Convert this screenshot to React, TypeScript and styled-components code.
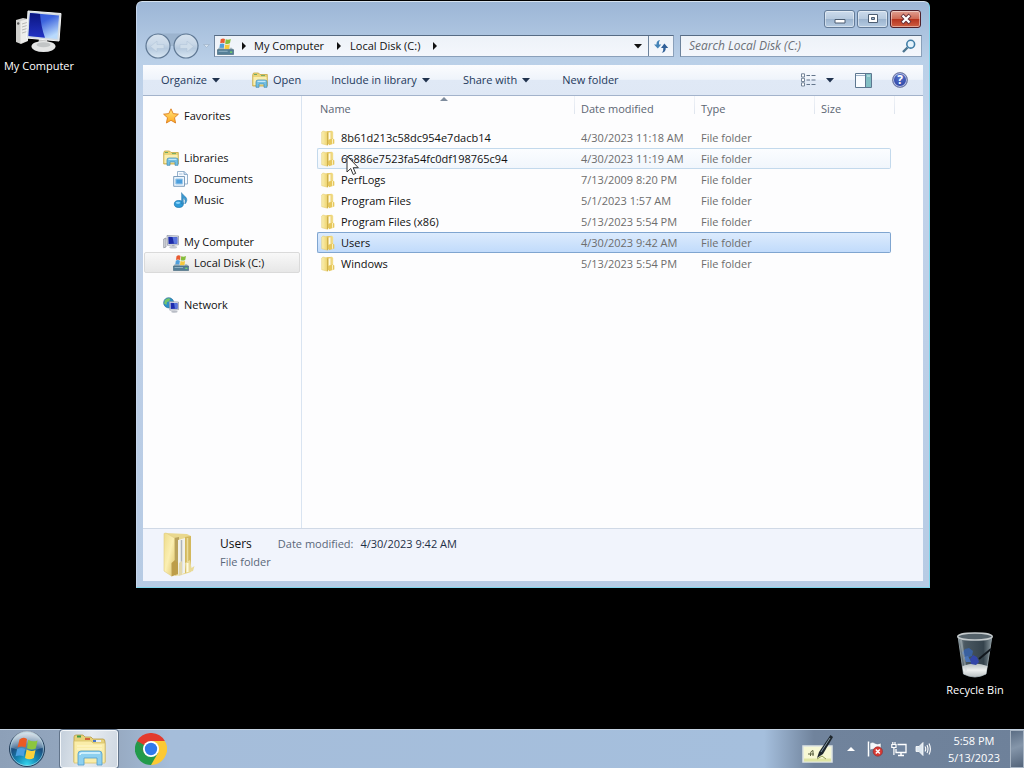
import React from "react";
import styled, { createGlobalStyle } from "styled-components";

const GlobalStyle = createGlobalStyle`
  * { box-sizing: border-box; }
  body { margin: 0; background: #000; }
  body, button, input {
    font-family: "Open Sans", "Noto Sans", sans-serif;
    font-size: 11px;
    line-height: 16px;
  }
  button { border: 0; padding: 0; margin: 0; background: none; color: inherit; }
  svg { display: block; flex: none; }
  h1, p, dl, dd, ul { margin: 0; padding: 0; }
`;

/* ---------- icons ---------- */

const StartOrb = () => (
  <svg width="38" height="38" viewBox="0 0 38 38" aria-hidden="true">
    <defs>
      <radialGradient id="orb" cx="50%" cy="95%" r="90%">
        <stop offset="0" stopColor="#35d6ee" />
        <stop offset=".35" stopColor="#1587b4" />
        <stop offset=".65" stopColor="#1b4f80" />
        <stop offset="1" stopColor="#8fa8bd" />
      </radialGradient>
      <linearGradient id="orbShine" x1="0" y1="0" x2="0" y2="1">
        <stop offset="0" stopColor="#fff" stopOpacity=".7" />
        <stop offset="1" stopColor="#fff" stopOpacity=".15" />
      </linearGradient>
    </defs>
    <circle cx="19" cy="19" r="17.500" fill="url(#orb)" stroke="#233e5a" />
    <path d="M2.500 17.500A16.500 16.500 0 0 1 35.500 17.500Q19 24 2.500 17.500Z" fill="url(#orbShine)" />
    <circle cx="19" cy="19" r="16.500" fill="none" stroke="#b8dcea" strokeOpacity=".6" />
    <path d="M11.500 9.500Q15 6.500 19 9L17.500 17.500Q13.500 15.500 9.500 17.500Z" fill="#ea5b24" />
    <path d="M20.300 9.800Q24.500 12.500 29.500 10.500L27.800 18.500Q23 20.500 19 18.300Z" fill="#8cc63e" />
    <path d="M9.200 19Q13.500 17 17.200 19L15.700 26.500Q12 24.500 7.500 26.300Z" fill="#4a9fe0" />
    <path d="M18.600 19.600Q23 22 27.500 20L25.800 28Q21.500 30.500 17 28Z" fill="#fbd23c" />
  </svg>
);

const FolderSmall = () => (
  <svg width="16" height="16" viewBox="0 0 16 16" aria-hidden="true">
    <defs>
      <linearGradient id="fs" x1="0" y1="0" x2="1" y2="0">
        <stop offset="0" stopColor="#fbf0b4" />
        <stop offset="1" stopColor="#ecd16a" />
      </linearGradient>
      <linearGradient id="fsb" x1="0" y1="0" x2="1" y2="0">
        <stop offset="0" stopColor="#e0bd4e" />
        <stop offset="1" stopColor="#f3df8e" />
      </linearGradient>
    </defs>
    <path d="M6.500 1.200L12 .8 13.200 2V13L7 14.500Z" fill="url(#fsb)" />
    <path d="M8.600 2.500L10.500 2.200V9L8.600 10Z" fill="#fffae3" />
    <path d="M1.700 2L3 1 7.800 2.200V15.300L1.700 13.700Z" fill="url(#fs)" stroke="#e2c866" strokeWidth=".5" />
    <path d="M7.500 2.500V15" stroke="#c8a844" strokeWidth=".8" />
    <path d="M8.500 10L12.500 8.500 14.300 9.500V13.500L9 15.300Z" fill="#e6c75c" />
    <path d="M12.500 9V13.800" stroke="#fbf0ba" />
  </svg>
);

const FolderLarge = () => (
  <svg width="34" height="46" viewBox="0 0 34 46" aria-hidden="true">
    <defs>
      <linearGradient id="fl" x1="0" y1="0" x2="1" y2="1">
        <stop offset="0" stopColor="#eedc8c" />
        <stop offset=".5" stopColor="#fbefb2" />
        <stop offset="1" stopColor="#e0c56c" />
      </linearGradient>
    </defs>
    <path d="M2 1L24 2 28 4V40L22 42 12 44Z" fill="#e9d88e" />
    <path d="M11 6L16 5V42H11Z" fill="#b9a25c" />
    <path d="M15 8L22 6V41L15 43Z" fill="#f1f1ec" />
    <path d="M18.500 8V41" stroke="#aeb4bb" strokeWidth="1.500" />
    <path d="M22 5L28 4V38L22 41Z" fill="#d3b85d" />
    <path d="M24.500 6V38" stroke="#ebdc98" strokeWidth="1.500" />
    <path d="M1 1.500L3 1 11.500 6V30L8.500 32V44L1 39Z" fill="url(#fl)" stroke="#e0cc82" strokeWidth=".6" />
    <path d="M8.500 31L12 28 15 31V42L8.500 44.500Z" fill="#bd9d49" />
    <path d="M16 31L19 29V43L15.500 44Z" fill="#e3d9ac" />
    <path d="M22 31L27 28 28.500 36 31.500 34 30 39 23 41Z" fill="#e9da98" />
    <path d="M24.500 31V40" stroke="#fffbe0" strokeWidth="2" />
  </svg>
);

const LibraryFolder = () => (
  <svg width="16" height="16" viewBox="0 0 16 16" aria-hidden="true">
    <path d="M.7 3V14H15.300V2.500H8L6.500 1H1.500Z" fill="#ecd579" stroke="#c5a742" strokeWidth=".8" />
    <path d="M1.500 5H14.500V13H1.500Z" fill="#f9eeb1" />
    <path d="M2 2.500H5M9 3.600H13" stroke="#70a965" />
    <path d="M4 15.300V10Q4 8 6 8H13Q15 8 15 10V15.300H12V12H7V15.300Z" fill="#72bfe3" stroke="#4189b0" strokeWidth=".7" />
    <path d="M5.500 9.300H13.500" stroke="#d8f2ff" />
  </svg>
);

const StarIcon = () => (
  <svg width="16" height="16" viewBox="0 0 16 16" aria-hidden="true">
    <defs>
      <linearGradient id="star" x1="0" y1="0" x2="0" y2="1">
        <stop offset="0" stopColor="#ffe680" />
        <stop offset="1" stopColor="#ffa91f" />
      </linearGradient>
    </defs>
    <path d="M8 .8L10.200 5.600 15.400 6.200 11.500 9.700 12.600 15 8 12.300 3.400 15 4.500 9.700 .6 6.200 5.800 5.600Z" fill="url(#star)" stroke="#db7e20" strokeWidth=".9" />
  </svg>
);

const DocumentsIcon = () => (
  <svg width="16" height="16" viewBox="0 0 16 16" aria-hidden="true">
    <path d="M4.500 .5H11L14.500 3.500V13H4.500Z" fill="#f6faff" stroke="#8aa9c6" strokeWidth=".9" />
    <path d="M11 .5V3.500H14.500" fill="#c5daf0" stroke="#8aa9c6" strokeWidth=".9" />
    <path d="M6 3H9.500" stroke="#a9c4de" />
    <path d="M.7 5.500H11.500V15.300H.7Z" fill="#edf5fc" stroke="#7294b5" strokeWidth=".9" />
    <path d="M2.800 8H9.500V13H2.800Z" fill="#4c9fdd" stroke="#9cc9ec" />
  </svg>
);

const MusicIcon = () => (
  <svg width="16" height="16" viewBox="0 0 16 16" aria-hidden="true">
    <ellipse cx="5.800" cy="12" rx="4.500" ry="3.500" fill="#2f9bd8" stroke="#1971aa" strokeWidth=".7" />
    <path d="M8.600 12V.6C10 4 14.300 4.500 13.800 8.500Q13.300 11 11.800 12Q13 7.500 10.300 5.800V12Z" fill="#3a97cf" stroke="#2a79aa" strokeWidth=".5" />
    <ellipse cx="5" cy="10.800" rx="2.300" ry="1.100" fill="#8cd3fb" />
  </svg>
);

const ComputerIcon = () => (
  <svg width="16" height="16" viewBox="0 0 16 16" aria-hidden="true">
    <path d="M.7 5L3 4V13L.7 13.800Z" fill="#d3d6dc" stroke="#868b96" strokeWidth=".7" />
    <path d="M4 1.500L15.500 2V10.800L4.500 11.300Z" fill="#dfe3ea" stroke="#888e9d" strokeWidth=".7" />
    <path d="M5.300 2.800L14.300 3.200V9.700L5.500 10Z" fill="#1c2ba8" />
    <path d="M9.500 3L11 9.800 14.300 9.700V3.200Z" fill="#5a75dd" />
    <path d="M9 11H11.500V12.500H9Z" fill="#a7acb7" />
    <ellipse cx="10.200" cy="13.300" rx="4" ry="1.300" fill="#c3c7cf" />
  </svg>
);

const DriveIcon = ({ size = 16 }: { size?: number }) => (
  <svg width={size} height={size} viewBox="0 0 16 16" aria-hidden="true">
    <path d="M3.500 1.200Q5.500 -.3 7.500 .9L7 5Q5 4 3 5Z" fill="#e85b31" />
    <path d="M8.200 1.200Q10.500 2.200 13 .9L12.200 5Q10 6 7.700 5.300Z" fill="#86bd3c" />
    <path d="M2.800 5.700Q4.800 4.500 6.900 5.700L6.300 10H2.200Z" fill="#4f9edb" />
    <path d="M7.500 6.100Q9.500 6.900 12 5.900L11.500 10.500H6.900Z" fill="#f6c93d" />
    <path d="M1.500 9.200H6.200L7 10.500H11.700L12 9.200H14L15.600 11.500H.4Z" fill="#a5b6c0" />
    <path d="M.4 11H15.600V15.500H.4Z" fill="#557f98" stroke="#3f6478" strokeWidth=".6" />
    <path d="M1.500 12.500H10" stroke="#8fb1c4" />
    <path d="M12.300 13.300H14.300" stroke="#7ae45f" strokeWidth="1.200" />
  </svg>
);

const NetworkIcon = () => (
  <svg width="16" height="16" viewBox="0 0 16 16" aria-hidden="true">
    <circle cx="5.700" cy="5.800" r="5.100" fill="#2c8ec9" stroke="#236a93" strokeWidth=".6" />
    <path d="M2 3Q5 0 7.500 2L6 4.500 4 5 3.500 8 1 6.500Z" fill="#75c56a" />
    <path d="M6.300 4.500L15.500 5V12.700L6.800 13.200Z" fill="#e2e5ec" stroke="#858c9b" strokeWidth=".6" />
    <path d="M7.500 5.800L14.500 6.200V11.700L7.700 12Z" fill="#1d2cae" />
    <path d="M11 6L12 11.800 14.500 11.700V6.200Z" fill="#5974dc" />
    <ellipse cx="11.500" cy="14.700" rx="3.200" ry="1.100" fill="#b9bdc6" />
  </svg>
);

const DesktopComputer = () => (
  <svg width="48" height="48" viewBox="0 0 48 48" aria-hidden="true">
    <defs>
      <linearGradient id="scr" x1="0" y1="0" x2=".6" y2="1">
        <stop offset="0" stopColor="#2d52d8" />
        <stop offset=".45" stopColor="#3c63dd" />
        <stop offset="1" stopColor="#b9dafc" />
      </linearGradient>
      <linearGradient id="scrDark" x1="0" y1="0" x2="0" y2="1">
        <stop offset="0" stopColor="#0b1580" />
        <stop offset="1" stopColor="#2233c4" />
      </linearGradient>
    </defs>
    <path d="M1 13L8 11 13 12V34L6 37 1 35Z" fill="#cfcfcd" />
    <path d="M5.500 14L13 12V33.500L5.500 36.500Z" fill="#ededeb" />
    <path d="M7 17L12 15.500M7 20L12 18.500M7 23L12 21.500M7 26L12 24.500" stroke="#b8b8b6" />
    <circle cx="3.200" cy="16.500" r="1.200" fill="#555" />
    <path d="M24 32L32 33 33 38H23Z" fill="#c7c8c8" />
    <ellipse cx="28.500" cy="39.500" rx="12" ry="5.500" fill="#e4e5e5" />
    <ellipse cx="28.500" cy="37.800" rx="7" ry="2.500" fill="#c2c5c6" />
    <path d="M13 4L46 6.500 44 34 11.500 31Z" fill="#d3dbe2" stroke="#f6f7f8" />
    <path d="M15 6L44 8.500 42.300 32 13.500 29Z" fill="url(#scr)" />
    <path d="M15 6L25 7Q26 20 30 30.700L13.500 29Z" fill="url(#scrDark)" />
  </svg>
);

const RecycleBin = () => (
  <svg width="48" height="48" viewBox="0 0 48 48" aria-hidden="true">
    <defs>
      <linearGradient id="bin" x1="0" y1="0" x2="1" y2="0">
        <stop offset="0" stopColor="#8a989e" />
        <stop offset=".2" stopColor="#4a5861" />
        <stop offset=".75" stopColor="#35434c" />
        <stop offset="1" stopColor="#8a989e" />
      </linearGradient>
      <linearGradient id="trash" x1="0" y1="0" x2="0" y2="1">
        <stop offset="0" stopColor="#b4bcbd" />
        <stop offset=".5" stopColor="#eef0ef" />
        <stop offset="1" stopColor="#b9c0c2" />
      </linearGradient>
    </defs>
    <path d="M7 5L12.500 43Q24 49 35 43L41 5Z" fill="url(#bin)" stroke="#89979d" />
    <path d="M11.500 35Q24 30 36.500 35L35 43Q24 49 12.500 43Z" fill="url(#trash)" />
    <path d="M11 22L14 18 18 17 22 20 21 25 15 27Z" fill="#39609f" />
    <path d="M19 28L22 24 26 26 28 31 25 34 20 33Z" fill="#3346a8" />
    <path d="M13 26L17 25 20 31 15 31Z" fill="#4a74b8" />
    <path d="M28 28L40 18" stroke="#11171d" strokeWidth="2" />
    <ellipse cx="24" cy="5.500" rx="17.200" ry="3.500" fill="#55626a" stroke="#c5cbcd" strokeWidth="1.500" />
    <path d="M10 9L15 40" stroke="#c8d2d5" strokeOpacity=".4" strokeWidth="2" />
  </svg>
);

const ExplorerIcon = () => (
  <svg width="34" height="34" viewBox="0 0 34 34" aria-hidden="true">
    <path d="M2 5Q2 3 4 3H11L13 5H19L21 7H31Q33 7 33 10V30H2Z" fill="#e7d27a" stroke="#b79c48" strokeWidth=".8" />
    <path d="M5 4.500H9" stroke="#3f9d46" strokeWidth="2" />
    <path d="M13 7H18" stroke="#d5653a" strokeWidth="2" />
    <path d="M21 9H29" stroke="#e8eef6" strokeWidth="2" />
    <path d="M21 9H24" stroke="#4a78c4" strokeWidth="2" />
    <path d="M2 9H19L21 11H33V31H2Z" fill="#faeda9" stroke="#d8c16a" strokeWidth=".8" />
    <path d="M5 14H30M5 17H30" stroke="#fff8d0" />
    <path d="M6 33V22Q6 19 9 19H27Q30 19 30 22V33H25V26H12V33Z" fill="#8dd0f0" stroke="#4f9ccb" strokeWidth=".8" />
    <path d="M8 23Q8 21 10 21H28" stroke="#e0f7ff" strokeWidth="1.500" fill="none" />
  </svg>
);

const ChromeIcon = () => (
  <svg width="32" height="32" viewBox="0 0 48 48" aria-hidden="true">
    <path d="M24 24L44.800 12A24 24 0 0 1 24 48Z" fill="#fcc934" />
    <path d="M24 24L24 48A24 24 0 0 1 3.200 12Z" fill="#229a4b" />
    <path d="M24 12H44.800L34.400 30Z" fill="#fcc934" />
    <path d="M34.400 30L24 48 13.600 30Z" fill="#229a4b" />
    <path d="M3.200 12A24 24 0 0 1 44.800 12H24L13.600 30Z" fill="#e33b2e" />
    <path d="M3.200 12L13.600 30 24 36V24Z" fill="#229a4b" />
    <circle cx="24" cy="24" r="12" fill="#fff" />
    <circle cx="24" cy="24" r="9.300" fill="#3079eb" />
  </svg>
);

const TabletInput = () => (
  <svg width="34" height="30" viewBox="0 0 34 30" aria-hidden="true">
    <path d="M1 12H30V28H1Z" fill="#f7f8d5" stroke="#dde3e4" strokeWidth="1.500" />
    <path d="M2 24.500H29V27.500H2Z" fill="#dfe4a2" />
    <path d="M6 20H12M8.500 22Q8 17 11 16.500V22" stroke="#5a6040" fill="none" />
    <path d="M28.500 1L31 3 21 20 15 24 17 18Z" fill="#1e262d" />
    <path d="M28 4L19 18" stroke="#8095a3" />
    <path d="M15 25L20 22 24 25" stroke="#96a056" fill="none" />
  </svg>
);

const FlagIcon = () => (
  <svg width="16" height="16" viewBox="0 0 16 16" aria-hidden="true">
    <path d="M1.500 .5V15.500" stroke="#fff" strokeWidth="1.500" />
    <path d="M3 2Q6 .5 8 2.200T14 2V9Q11 10.500 8.500 9T3 9Z" fill="#f4f7fa" stroke="#54687c" strokeWidth=".5" />
    <circle cx="10.800" cy="10.500" r="4.700" fill="#d83933" stroke="#8e2a2c" strokeWidth=".6" />
    <path d="M8.800 8.500L12.800 12.500M12.800 8.500L8.800 12.500" stroke="#fff" strokeWidth="1.500" />
  </svg>
);

const EthernetIcon = () => (
  <svg width="16" height="16" viewBox="0 0 16 16" aria-hidden="true">
    <path d="M6.500 3.500H15V11.500H5V8" fill="#71859f" stroke="#fff" strokeWidth="1.300" />
    <path d="M7 14.500H13M10 12V14" stroke="#fff" strokeWidth="1.500" />
    <path d="M.8 3.500H5V6.500H.8ZM1.800 3V1M4 3V1M2.900 7V14" stroke="#fff" fill="none" strokeWidth="1.200" />
  </svg>
);

const VolumeIcon = () => (
  <svg width="16" height="16" viewBox="0 0 16 16" aria-hidden="true">
    <path d="M1 5.500H4L8 1.500V14.500L4 10.500H1Z" fill="#dce6ef" stroke="#fff" strokeWidth=".8" />
    <path d="M10 5.500Q11.500 8 10 10.500M12 4Q14 8 12 12M14 2.500Q16.800 8 14 13.500" fill="none" stroke="#fff" strokeWidth="1.100" />
  </svg>
);

const Arrow = ({ dir = "down", color = "#20324d" }: { dir?: "down" | "right" | "up"; color?: string }) => (
  <svg width="8" height="8" viewBox="0 0 8 8" aria-hidden="true">
    <path
      d={dir === "down" ? "M0 2H8L4 6.500Z" : dir === "right" ? "M2 0L6 4 2 8Z" : "M0 6H8L4 2Z"}
      fill={color}
    />
  </svg>
);

const NavArrows = () => (
  <svg width="68" height="28" viewBox="0 0 68 28" aria-hidden="true">
    <defs>
      <linearGradient id="nav" x1="0" y1="0" x2="0" y2="1">
        <stop offset="0" stopColor="#d6e2ee" />
        <stop offset=".4" stopColor="#c9d8e8" />
        <stop offset=".6" stopColor="#b5c9de" />
        <stop offset="1" stopColor="#d9e7f3" />
      </linearGradient>
    </defs>
    <path d="M14 1.500H44Q52 4 55 14H4Q6 4 14 1.500Z" fill="#8ea5c0" fillOpacity=".55" />
    <circle cx="14" cy="14" r="12" fill="url(#nav)" stroke="#5f7894" strokeWidth="1.200" />
    <circle cx="42" cy="14" r="12" fill="url(#nav)" stroke="#5f7894" strokeWidth="1.200" />
    <path d="M6.500 14.500L13 9V12.500H20V16.500H13V20ZM49.500 14.500L43 9V12.500H36V16.500H43V20Z" fill="#cfddea" stroke="#b4c6da" strokeWidth=".6" />
    <path d="M59.500 12.500H65.500L62.500 15.500Z" fill="#d5e2ef" stroke="#9db2c9" strokeWidth=".7" />
  </svg>
);

const RefreshIcon = () => (
  <svg width="16" height="16" viewBox="0 0 16 16" aria-hidden="true">
    <path d="M7 2Q3.200 2.500 3.500 6.500H1L4.800 10.500 8.300 6.500H6Q5.500 3.800 7 2Z" fill="#4484b8" />
    <path d="M8.800 14.800Q13 14 12.700 10H15.200L11.400 5.500 8 10H10.300Q10.700 13 8.800 14.800Z" fill="#2f5f98" />
  </svg>
);

const SearchIcon = () => (
  <svg width="14" height="14" viewBox="0 0 14 14" aria-hidden="true">
    <path d="M1 13L5.500 8.500" stroke="#4c7590" strokeWidth="2.400" />
    <circle cx="8.700" cy="5.200" r="3.900" fill="#e4f3fc" stroke="#3f7da6" strokeWidth="1.600" />
  </svg>
);

const ViewIcon = () => (
  <svg width="16" height="14" viewBox="0 0 16 14" aria-hidden="true">
    <path d="M1.500 .8H4.500V4H1.500ZM1.500 5.300H4.500V8.500H1.500ZM1.500 9.800H4.500V13H1.500Z" fill="#fff" stroke="#66788d" strokeWidth=".9" />
    <path d="M6.500 2.500H10M11.500 2.500H15.500M6.500 7H10M11.500 7H15.500M6.500 11.500H10M11.500 11.500H15.500" stroke="#62748a" />
  </svg>
);

const PaneIcon = () => (
  <svg width="17" height="15" viewBox="0 0 17 15" aria-hidden="true">
    <path d="M.5 .5H16.500V14.500H.5Z" fill="#f9fcff" stroke="#5d7790" />
    <path d="M1 2.500H10" stroke="#9eb3c8" />
    <path d="M11 1H16V14H11Z" fill="#82bfc4" />
    <path d="M10.500 1V14" stroke="#5d7790" />
    <path d="M12 3H15" stroke="#d3eef0" />
  </svg>
);

const CursorIcon = () => (
  <svg width="14" height="21" viewBox="0 0 14 21" aria-hidden="true">
    <path d="M1 1V17L4.700 13.500 7.200 19.500 9.700 18.400 7.200 12.700H12.300Z" fill="#fff" stroke="#333" strokeWidth="1" />
  </svg>
);

/* ---------- layout ---------- */

const Screen = styled.div`
  display: flex;
  flex-direction: column;
  min-height: 100vh;
`;

const Desktop = styled.main`
  flex: 1;
  display: grid;
  grid-template-columns: 136px minmax(0, 1fr) 94px;
`;

const DesktopColumn = styled.div<{ $end?: boolean }>`
  display: flex;
  flex-direction: column;
  justify-content: ${(p) => (p.$end ? "flex-end" : "flex-start")};
  align-items: ${(p) => (p.$end ? "center" : "flex-start")};
  padding: ${(p) => (p.$end ? "0 4px 31px 0" : "7px 0 0")};
`;

const Shortcut = styled.button`
  display: flex;
  flex-direction: column;
  align-items: center;
  gap: 3px;
  width: 78px;
  color: #fff;
`;

const Window = styled.section`
  display: flex;
  flex-direction: column;
  margin: 1px 0 141px;
  padding: 0 6px 6px;
  border: 1px solid;
  border-color: #d5e2ef #7fd6ec #7fd6ec #c6d6ec;
  border-radius: 6px 6px 0 0;
  background: linear-gradient(#9cb6d6, #bad0e8 60px, #c3d3ea 120px, #b7cbe4);
`;

const TitleBar = styled.header`
  display: flex;
  justify-content: flex-end;
  gap: 2px;
  padding: 8px 2px 0 0;
  height: 29px;
`;

const CaptionButton = styled.button<{ $close?: boolean }>`
  display: grid;
  place-items: center;
  width: 31px;
  height: 18px;
  border: 1px solid ${(p) => (p.$close ? "#51202a" : "#637b98")};
  border-radius: 3px;
  box-shadow: inset 0 0 0 1px rgba(255, 255, 255, 0.45);
  background: ${(p) =>
    p.$close
      ? "linear-gradient(#e0a092 0, #cf6a55 48%, #b5321d 50%, #cf5f42)"
      : "linear-gradient(#ccdbec 0, #b7cadf 48%, #9bb3ce 50%, #b5cbe2)"};
`;

const NavBar = styled.nav`
  display: flex;
  align-items: center;
  height: 34px;
  padding: 0 1px 4px;
`;

const field = `
  height: 22px;
  border: 1px solid #8aa0ba;
  border-top-color: #566b84;
  border-left-color: #6c829b;
  background: linear-gradient(#edf2f8, #f4f7fc);
`;

const AddressBar = styled.div`
  ${field}
  flex: 1;
  display: flex;
  align-items: center;
  margin-left: 2px;
  padding-left: 2px;
  color: #111;
`;

const Crumb = styled.button`
  padding: 0 11px 0 0;
`;

const CrumbArrow = styled.button<{ $gap: number }>`
  margin-right: ${(p) => p.$gap}px;
`;

const AddressEnd = styled.div`
  display: flex;
  align-items: stretch;
  align-self: stretch;
  margin-left: auto;
`;

const AddressButton = styled.button<{ $divided?: boolean }>`
  display: grid;
  place-items: center;
  width: ${(p) => (p.$divided ? 25 : 20)}px;
  border-left: ${(p) => (p.$divided ? "1px solid #6c829b" : "0")};
`;

const SearchBox = styled.label`
  ${field}
  display: flex;
  align-items: center;
  width: 242px;
  margin-left: 6px;
  padding: 0 5px 0 8px;
`;

const SearchInput = styled.input`
  flex: 1;
  min-width: 0;
  border: 0;
  padding: 0;
  background: none;
  outline: none;
  font-style: italic;
  font-size: 12px;
  &::placeholder { color: #6c7077; opacity: 1; }
`;

const Client = styled.div`
  flex: 1;
  display: flex;
  flex-direction: column;
  background: #fdfdfe;
`;

const Toolbar = styled.div`
  display: flex;
  align-items: center;
  height: 31px;
  padding: 0 15px 0 18px;
  border-bottom: 1px solid #a3b3cb;
  background: linear-gradient(#fbfcfe 0, #eff4fb 48%, #e0e9f6 50%, #dfe8f5);
  color: #1e395b;
`;

const ToolButton = styled.button<{ $gap?: number }>`
  display: flex;
  align-items: center;
  gap: 5px;
  margin-right: ${(p) => p.$gap ?? 0}px;
`;

const ToolbarEnd = styled.div`
  display: flex;
  align-items: center;
  margin-left: auto;
`;

const HelpDisc = styled.span`
  display: grid;
  place-items: center;
  width: 16px;
  height: 16px;
  border: 1px solid #767fa5;
  border-radius: 50%;
  background: radial-gradient(circle at 50% 30%, #5573c9, #24389c);
  box-shadow: inset 0 0 0 1px #b5bfe2;
  color: #fff;
  font-size: 12px;
  font-weight: 700;
  line-height: 14px;
`;

const Panes = styled.div`
  flex: 1;
  display: grid;
  grid-template-columns: 159px minmax(0, 1fr);
`;

const Sidebar = styled.aside`
  display: flex;
  flex-direction: column;
  gap: 21px;
  padding: 9px 1px;
  border-right: 1px solid #d9e4f1;
`;

const TreeGroup = styled.ul`
  list-style: none;
`;

const TreeItem = styled.a<{ $child?: boolean; $current?: boolean }>`
  display: flex;
  align-items: center;
  gap: 5px;
  height: 21px;
  padding-left: ${(p) => (p.$child ? 28 : 18)}px;
  border: 1px solid ${(p) => (p.$current ? "#dadada" : "transparent")};
  border-radius: 2px;
  background: ${(p) => (p.$current ? "linear-gradient(#f8f8f8, #e7e7e7)" : "none")};
  color: #111;
  text-decoration: none;
`;

const FileList = styled.div`
  padding-left: 15px;
`;

const FileTable = styled.table`
  width: 100%;
  table-layout: fixed;
  border-spacing: 0;
`;

const HeadCell = styled.th<{ $width?: number; $first?: boolean; $last?: boolean }>`
  position: relative;
  width: ${(p) => (p.$width ? `${p.$width}px` : "auto")};
  height: 31px;
  padding: ${(p) => (p.$first ? "5px 0 0 3px" : "5px 0 0 7px")};
  background: ${(p) =>
    p.$first
      ? "none"
      : `linear-gradient(#f0f3f8, #dfe5ee) ${p.$last ? 3 : 0}px 0 / 1px 18px no-repeat`};
  color: #5c6673;
  font-weight: 400;
  text-align: left;
  vertical-align: top;
`;

const SortMark = styled.span`
  position: absolute;
  top: -1px;
  left: 123px;
`;

type RowState = "plain" | "hover" | "selected";

const rowLook = {
  plain: { line: "transparent", fill: "none" },
  hover: { line: "#c3d9ec", fill: "linear-gradient(#fbfdff, #f1f6fc)" },
  selected: { line: "#7fa5d0", fill: "linear-gradient(#dcebfd, #c1dbfb)" },
};

const Cell = styled.td<{ $state: RowState }>`
  height: 21px;
  padding: 0 0 0 7px;
  border: 0 solid ${(p) => rowLook[p.$state].line};
  border-width: 1px 0;
  background: ${(p) => rowLook[p.$state].fill};
  color: #6d6d6d;
  white-space: nowrap;
  &:first-child { padding-left: 2px; border-left-width: 1px; border-radius: 2px 0 0 2px; color: #111; }
  &:last-child { border-right-width: 1px; border-radius: 0 2px 2px 0; }
`;

const FileName = styled.span`
  position: relative;
  display: flex;
  align-items: center;
  gap: 5px;
`;

const Pointer = styled.span`
  position: absolute;
  left: 26px;
  top: 4px;
  z-index: 1;
`;

const Details = styled.footer`
  display: flex;
  gap: 23px;
  height: 53px;
  padding: 3px 20px;
  border-top: 1px solid #d0d9e6;
  background: #f1f4fc;
  color: #5a6779;
`;

const DetailsText = styled.div`
  display: grid;
  grid-template-columns: auto auto auto;
  grid-auto-rows: 18px;
  align-content: start;
  align-items: center;
  padding-top: 3px;
`;

const DetailsName = styled.h1`
  margin-right: 26px;
  color: #111;
  font-size: 12px;
  font-weight: 400;
`;

const DetailsValue = styled.span`
  margin-left: 7px;
  color: #1e2f47;
`;

const Taskbar = styled.footer`
  display: flex;
  align-items: stretch;
  height: 39px;
  border-top: 1px solid #c5d3e2;
  background: linear-gradient(90deg, #8da0b8 0, #98abc3 120px, #a5bdda 170px, #a5bfdd calc(100% - 260px), #70839c calc(100% - 210px), #6e819a);
`;

const TaskButton = styled.button<{ $active?: boolean; $width: number }>`
  display: grid;
  place-items: center;
  width: ${(p) => p.$width}px;
  border: ${(p) => (p.$active ? "1px solid #f4f7fa" : "0")};
  border-radius: 3px;
  background: ${(p) => (p.$active ? "linear-gradient(100deg, #c5d0dc, #e6ebf0 50%, #ced7e1)" : "none")};
  box-shadow: ${(p) => (p.$active ? "0 0 0 1px #62748a" : "none")};
`;

const StartButton = styled.button`
  display: grid;
  place-items: center;
  width: 54px;
  margin-right: 6px;
`;

const Tray = styled.div`
  display: flex;
  align-items: center;
  margin-left: auto;
`;

const TrayButton = styled.button<{ $gap: number }>`
  margin-right: ${(p) => p.$gap}px;
`;

const Clock = styled.time`
  margin-right: 10px;
  color: #fff;
  line-height: 17px;
  text-align: center;
`;

const ShowDesktop = styled.button`
  align-self: stretch;
  width: 14px;
  border: 1px solid #a8b5c4;
  background: linear-gradient(160deg, #5b6d84, #8596aa 45%, #53647a);
`;

/* ---------- data ---------- */

type TreeEntry = { label: string; icon: React.ReactNode; child?: boolean; current?: boolean };

const tree: TreeEntry[][] = [
  [{ label: "Favorites", icon: <StarIcon /> }],
  [
    { label: "Libraries", icon: <LibraryFolder /> },
    { label: "Documents", icon: <DocumentsIcon />, child: true },
    { label: "Music", icon: <MusicIcon />, child: true },
  ],
  [
    { label: "My Computer", icon: <ComputerIcon /> },
    { label: "Local Disk (C:)", icon: <DriveIcon />, child: true, current: true },
  ],
  [{ label: "Network", icon: <NetworkIcon /> }],
];

const files: { name: string; date: string; state: RowState }[] = [
  { name: "8b61d213c58dc954e7dacb14", date: "4/30/2023 11:18 AM", state: "plain" },
  { name: "65886e7523fa54fc0df198765c94", date: "4/30/2023 11:19 AM", state: "hover" },
  { name: "PerfLogs", date: "7/13/2009 8:20 PM", state: "plain" },
  { name: "Program Files", date: "5/1/2023 1:57 AM", state: "plain" },
  { name: "Program Files (x86)", date: "5/13/2023 5:54 PM", state: "plain" },
  { name: "Users", date: "4/30/2023 9:42 AM", state: "selected" },
  { name: "Windows", date: "5/13/2023 5:54 PM", state: "plain" },
];

export default function App() {
  return (
    <Screen>
      <GlobalStyle />
      <Desktop>
        <DesktopColumn>
          <Shortcut>
            <DesktopComputer />
            My Computer
          </Shortcut>
        </DesktopColumn>

        <Window>
          <TitleBar>
            <CaptionButton aria-label="Minimize">
              <svg width="12" height="12" viewBox="0 0 12 12">
                <path d="M1 6.500H11V10H1Z" fill="#fff" stroke="#4c5d72" />
              </svg>
            </CaptionButton>
            <CaptionButton aria-label="Maximize">
              <svg width="12" height="12" viewBox="0 0 12 12">
                <path d="M1.500 1.500H10.500V9.500H1.500Z" fill="#fff" stroke="#4c5d72" />
                <path d="M4.500 4.500H7.500V6.500H4.500Z" fill="#9db3cc" stroke="#4c5d72" />
              </svg>
            </CaptionButton>
            <CaptionButton $close aria-label="Close">
              <svg width="12" height="12" viewBox="0 0 12 12">
                <path d="M2 2L10 10M10 2L2 10" stroke="#653039" strokeWidth="4" />
                <path d="M2.500 2.500L9.500 9.500M9.500 2.500L2.500 9.500" stroke="#fff" strokeWidth="2.200" />
              </svg>
            </CaptionButton>
          </TitleBar>

          <NavBar>
            <NavArrows />
            <AddressBar>
              <DriveIcon size={17} />
              <AddressButton aria-label="Locations">
                <Arrow dir="right" color="#111" />
              </AddressButton>
              <Crumb>My Computer</Crumb>
              <CrumbArrow $gap={7} aria-label="My Computer folders">
                <Arrow dir="right" color="#111" />
              </CrumbArrow>
              <Crumb>Local Disk (C:)</Crumb>
              <CrumbArrow $gap={0} aria-label="Local Disk folders">
                <Arrow dir="right" color="#111" />
              </CrumbArrow>
              <AddressEnd>
                <AddressButton aria-label="Previous locations">
                  <Arrow color="#111" />
                </AddressButton>
                <AddressButton $divided aria-label="Refresh">
                  <RefreshIcon />
                </AddressButton>
              </AddressEnd>
            </AddressBar>
            <SearchBox>
              <SearchInput placeholder="Search Local Disk (C:)" aria-label="Search Local Disk (C:)" />
              <SearchIcon />
            </SearchBox>
          </NavBar>

          <Client>
            <Toolbar>
              <ToolButton $gap={32}>Organize <Arrow /></ToolButton>
              <ToolButton $gap={30}><LibraryFolder /> Open</ToolButton>
              <ToolButton $gap={33}>Include in library <Arrow /></ToolButton>
              <ToolButton $gap={32}>Share with <Arrow /></ToolButton>
              <ToolButton>New folder</ToolButton>
              <ToolbarEnd>
                <ToolButton $gap={10} aria-label="Change view"><ViewIcon /></ToolButton>
                <ToolButton $gap={21} aria-label="More views"><Arrow /></ToolButton>
                <ToolButton $gap={20} aria-label="Preview pane"><PaneIcon /></ToolButton>
                <ToolButton aria-label="Help"><HelpDisc>?</HelpDisc></ToolButton>
              </ToolbarEnd>
            </Toolbar>

            <Panes>
              <Sidebar>
                {tree.map((group) => (
                  <TreeGroup key={group[0].label}>
                    {group.map((item) => (
                      <li key={item.label}>
                        <TreeItem href="#" $child={item.child} $current={item.current}>
                          {item.icon}
                          {item.label}
                        </TreeItem>
                      </li>
                    ))}
                  </TreeGroup>
                ))}
              </Sidebar>

              <FileList>
                <FileTable>
                  <thead>
                    <tr>
                      <HeadCell $width={257} $first>
                        Name
                        <SortMark><Arrow dir="up" color="#7e8c9d" /></SortMark>
                      </HeadCell>
                      <HeadCell $width={120}>Date modified</HeadCell>
                      <HeadCell $width={120}>Type</HeadCell>
                      <HeadCell $width={77}>Size</HeadCell>
                      <HeadCell $last aria-hidden="true" />
                    </tr>
                  </thead>
                  <tbody>
                    {files.map((f) => (
                      <tr key={f.name}>
                        <Cell $state={f.state}>
                          <FileName>
                            <FolderSmall />
                            {f.name}
                            {f.state === "hover" && <Pointer><CursorIcon /></Pointer>}
                          </FileName>
                        </Cell>
                        <Cell $state={f.state}>{f.date}</Cell>
                        <Cell $state={f.state}>File folder</Cell>
                        <Cell $state={f.state} />
                      </tr>
                    ))}
                  </tbody>
                </FileTable>
              </FileList>
            </Panes>

            <Details>
              <FolderLarge />
              <DetailsText>
                <DetailsName>Users</DetailsName>
                <span>Date modified:</span>
                <DetailsValue>4/30/2023 9:42 AM</DetailsValue>
                <span>File folder</span>
              </DetailsText>
            </Details>
          </Client>
        </Window>

        <DesktopColumn $end>
          <Shortcut>
            <RecycleBin />
            Recycle Bin
          </Shortcut>
        </DesktopColumn>
      </Desktop>

      <Taskbar>
        <StartButton aria-label="Start"><StartOrb /></StartButton>
        <TaskButton $width={58} $active aria-label="Windows Explorer"><ExplorerIcon /></TaskButton>
        <TaskButton $width={66} aria-label="Google Chrome"><ChromeIcon /></TaskButton>
        <Tray>
          <TrayButton $gap={11} aria-label="Tablet input"><TabletInput /></TrayButton>
          <TrayButton $gap={12} aria-label="Show hidden icons"><Arrow dir="up" color="#fff" /></TrayButton>
          <TrayButton $gap={8} aria-label="Action center"><FlagIcon /></TrayButton>
          <TrayButton $gap={8} aria-label="Network"><EthernetIcon /></TrayButton>
          <TrayButton $gap={17} aria-label="Volume"><VolumeIcon /></TrayButton>
          <Clock>
            5:58 PM
            <br />
            5/13/2023
          </Clock>
          <ShowDesktop aria-label="Show desktop" />
        </Tray>
      </Taskbar>
    </Screen>
  );
}
